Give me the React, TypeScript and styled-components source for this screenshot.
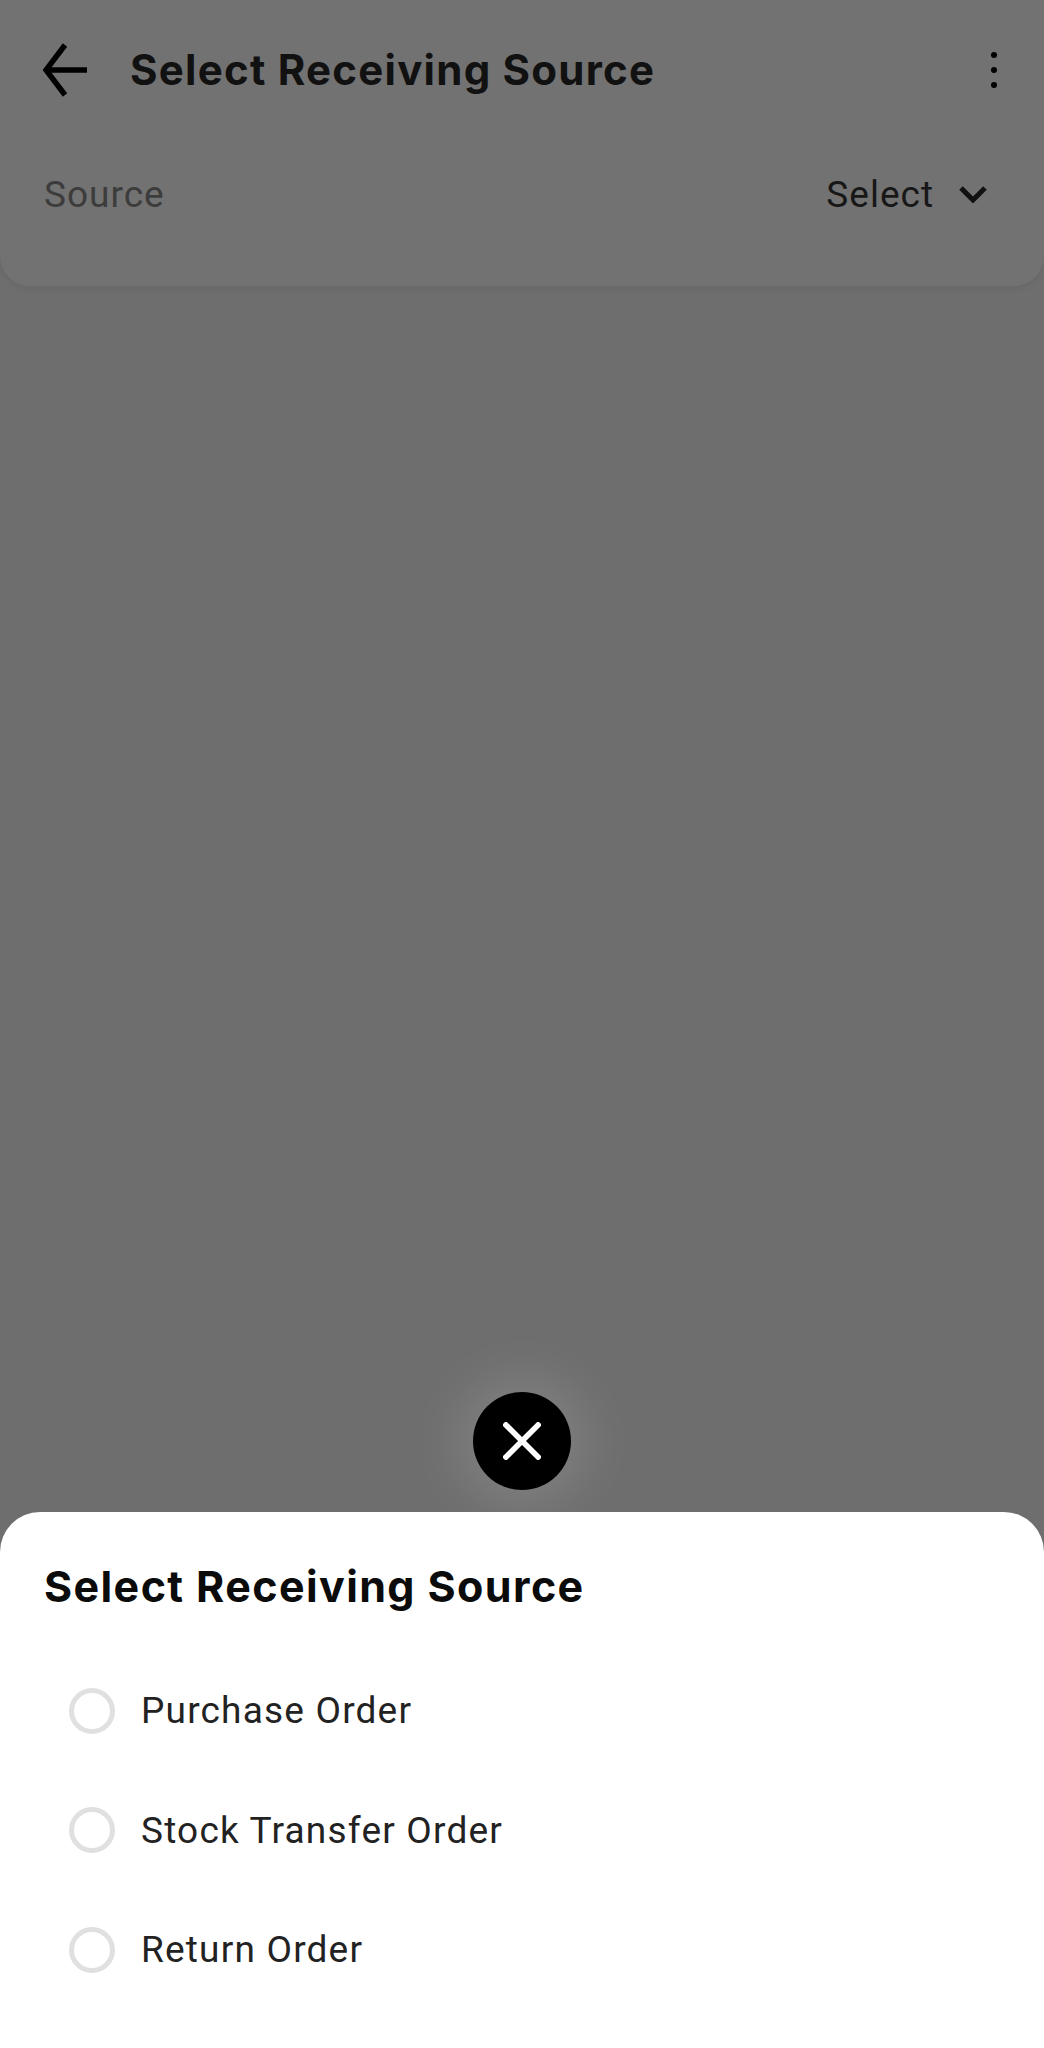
import React from 'react'
import styled, { createGlobalStyle } from 'styled-components'

const GlobalStyle = createGlobalStyle`
  html, body {
    margin: 0;
    padding: 0;
    background: #6e6e6e;
  }
  * {
    box-sizing: border-box;
  }
`

const sources = ['Purchase Order', 'Stock Transfer Order', 'Return Order']

export default function App() {
  return (
    <Screen>
      <GlobalStyle />
      <TopCard>
        <Toolbar>
          <BackIcon viewBox="0 0 44 56" aria-hidden="true">
            <path d="M22 3 3 28l19 25M3 28h41" />
          </BackIcon>
          <PageTitle>Select Receiving Source</PageTitle>
          <MoreDots aria-hidden="true">
            <Dot />
            <Dot />
            <Dot />
          </MoreDots>
        </Toolbar>
        <FieldRow>
          <FieldLabel>Source</FieldLabel>
          <FieldValue>
            Select
            <ChevronIcon viewBox="0 0 28 18" aria-hidden="true">
              <path d="M2 3l12 12L26 3" />
            </ChevronIcon>
          </FieldValue>
        </FieldRow>
      </TopCard>
      <Spacer />
      <CloseArea>
        <CloseButton aria-label="Close">
          <svg width="38" height="38" viewBox="0 0 38 38" aria-hidden="true">
            <path d="M1 1l36 36M37 1 1 37" stroke="#fff" strokeWidth="5.5" />
          </svg>
        </CloseButton>
      </CloseArea>
      <Sheet>
        <SheetTitle>Select Receiving Source</SheetTitle>
        <OptionList>
          {sources.map((source) => (
            <Option key={source}>
              <Radio />
              <OptionLabel>{source}</OptionLabel>
            </Option>
          ))}
        </OptionList>
      </Sheet>
    </Screen>
  )
}

const Screen = styled.div`
  width: 1044px;
  height: 2048px;
  display: flex;
  flex-direction: column;
  overflow: hidden;
  background: #6e6e6e;
`

const TopCard = styled.header`
  height: 286px;
  padding: 0 44px;
  background: #727272;
  border-radius: 0 0 30px 30px;
  box-shadow: 0 3px 6px rgba(0, 0, 0, 0.06);
`

const Toolbar = styled.div`
  height: 140px;
  display: flex;
  align-items: center;
`

const BackIcon = styled.svg`
  width: 44px;
  height: 56px;
  flex: none;
  margin-left: -1px;
  fill: none;
  stroke: #000;
  stroke-width: 5.5;
`

const PageTitle = styled.h1`
  flex: 1;
  margin: 0 0 2px 43px;
  font: 700 42px 'Inter', sans-serif;
  letter-spacing: 1.25px;
  color: #111;
`

const MoreDots = styled.div`
  display: flex;
  flex-direction: column;
  gap: 9px;
  margin-right: 3px;
`

const Dot = styled.span`
  width: 6px;
  height: 6px;
  border-radius: 50%;
  background: #000;
`

const FieldRow = styled.div`
  height: 108px;
  display: flex;
  align-items: center;
  justify-content: space-between;
`

const FieldLabel = styled.span`
  font: 400 37px 'Roboto', sans-serif;
  letter-spacing: 1px;
  color: #3c3c3c;
`

const FieldValue = styled.span`
  display: flex;
  align-items: center;
  gap: 25px;
  margin-right: 13px;
  font: 400 37px 'Roboto', sans-serif;
  letter-spacing: 1px;
  color: #171717;
`

const ChevronIcon = styled.svg`
  width: 28px;
  height: 18px;
  fill: none;
  stroke: #111;
  stroke-width: 5;
`

const Spacer = styled.div`
  flex: 1;
`

const CloseArea = styled.div`
  display: flex;
  justify-content: center;
  padding-bottom: 22px;
`

const CloseButton = styled.button`
  width: 98px;
  height: 98px;
  margin-left: -1px;
  padding: 0;
  display: flex;
  align-items: center;
  justify-content: center;
  border: none;
  border-radius: 50%;
  background: #000;
  box-shadow: 0 0 50px 18px rgba(255, 255, 255, 0.12);
`

const Sheet = styled.section`
  position: relative;
  height: 536px;
  padding: 0 44px;
  background: #fff;
  border-radius: 40px 40px 0 0;
`

const SheetTitle = styled.h2`
  margin: 0;
  padding-top: 49px;
  font: 700 43px/50px 'Inter', sans-serif;
  letter-spacing: 1.4px;
  color: #0b0b0b;
`

const OptionList = styled.div`
  margin-top: 40px;
  padding-left: 25px;
  display: flex;
  flex-direction: column;
`

const Option = styled.div`
  height: 119.5px;
  display: flex;
  align-items: center;
  gap: 26px;
`

const Radio = styled.span`
  width: 46px;
  height: 46px;
  flex: none;
  border: 5px solid #e0e0e0;
  border-radius: 50%;
`

const OptionLabel = styled.span`
  font: 400 37px 'Roboto', sans-serif;
  letter-spacing: 1.2px;
  color: #222;
`
